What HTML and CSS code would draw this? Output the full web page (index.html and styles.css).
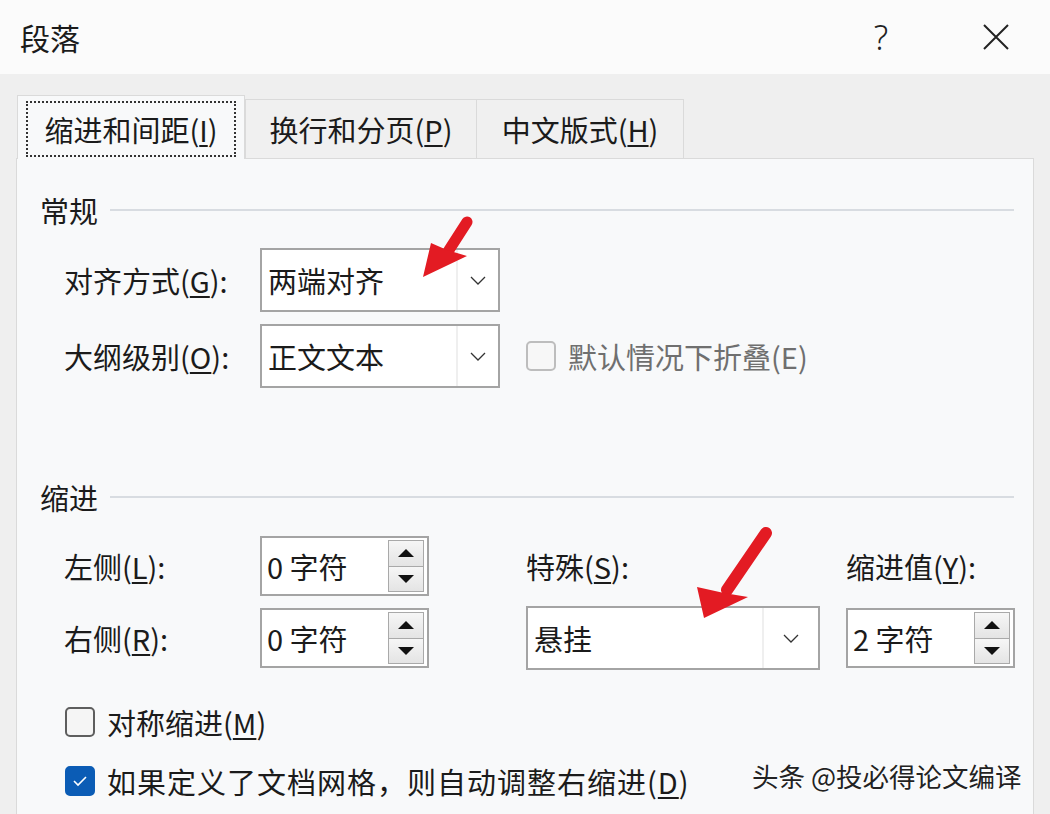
FILE: index.html
```html
<!DOCTYPE html>
<html lang="zh-CN">
<head>
  <meta charset="UTF-8" />
  <title>段落</title>
  <link rel="stylesheet" href="styles.css">
</head>
<body>

<div class="titlebar">
  <span class="title">段落</span>
  <span class="help">?</span>
  <span class="close">
    <svg width="26" height="26" viewBox="0 0 26 26"><path d="M1 1 L25 25 M25 1 L1 25" stroke="#222" stroke-width="2" fill="none"/></svg>
  </span>
</div>

<div class="tabs">
  <div class="tab active"><span class="focus">缩进和间距(<u>I</u>)</span></div>
  <div class="tab t2">换行和分页(<u>P</u>)</div>
  <div class="tab t3">中文版式(<u>H</u>)</div>
</div>

<div class="panel">
  <div class="group-title"><span>常规</span><i></i></div>

  <div class="row">
    <label class="lbl">对齐方式(<u>G</u>):</label>
    <div class="combo">
      <span class="val">两端对齐</span>
      <span class="drop"><svg width="16" height="9" viewBox="0 0 16 9"><path d="M1 1 L8 8 L15 1" stroke="#333" stroke-width="1.3" fill="none"/></svg></span>
    </div>
  </div>
  <div class="row r2">
    <label class="lbl">大纲级别(<u>O</u>):</label>
    <div class="combo">
      <span class="val">正文文本</span>
      <span class="drop"><svg width="16" height="9" viewBox="0 0 16 9"><path d="M1 1 L8 8 L15 1" stroke="#333" stroke-width="1.3" fill="none"/></svg></span>
    </div>
    <div class="check disabled"><span class="box"></span><span>默认情况下折叠(E)</span></div>
  </div>

  <div class="group-title g2"><span>缩进</span><i></i></div>

  <div class="indent">
    <label class="lbl">左侧(<u>L</u>):</label>
    <div class="spin"><span class="val">0 字符</span><span class="btns"><b class="up"></b><b class="down"></b></span></div>
    <span></span>
    <label class="lbl">特殊(<u>S</u>):</label>
    <span></span>
    <label class="lbl">缩进值(<u>Y</u>):</label>

    <label class="lbl">右侧(<u>R</u>):</label>
    <div class="spin"><span class="val">0 字符</span><span class="btns"><b class="up"></b><b class="down"></b></span></div>
    <span></span>
    <div class="combo wide">
      <span class="val">悬挂</span>
      <span class="drop"><svg width="16" height="9" viewBox="0 0 16 9"><path d="M1 1 L8 8 L15 1" stroke="#333" stroke-width="1.3" fill="none"/></svg></span>
    </div>
    <span></span>
    <div class="spin"><span class="val">2 字符</span><span class="btns"><b class="up"></b><b class="down"></b></span></div>
  </div>

  <div class="check c1"><span class="box"></span><span>对称缩进(<u>M</u>)</span></div>
  <div class="check c2 checked">
    <span class="box"><svg width="16" height="12" viewBox="0 0 16 12"><path d="M2 6 L6 10 L14 2" stroke="#fff" stroke-width="1.6" fill="none"/></svg></span>
    <span>如果定义了文档网格，则自动调整右缩进(<u>D</u>)</span>
  </div>
</div>

<div class="watermark">头条 @投必得论文编译</div>

<!-- 红色标注箭头 -->
<svg class="marks" width="1050" height="814" viewBox="0 0 1050 814">
  <line x1="467" y1="222" x2="449" y2="250" stroke="#e31b23" stroke-width="11" stroke-linecap="round"/>
  <polygon points="423,277 431,243 447,250 467,256" fill="#e31b23"/>
  <line x1="766" y1="533" x2="727" y2="590" stroke="#e31b23" stroke-width="12" stroke-linecap="round"/>
  <polygon points="704,618 697,587 724,593 748,597" fill="#e31b23"/>
</svg>

</body>
</html>
```

FILE: styles.css
```css
body { margin: 0; position: relative; height: 814px; overflow: hidden; background: #efefef; color: #1b1b1b;
       font-family: "Noto Sans CJK SC", "Noto Sans", sans-serif; font-size: 29px; }
u { text-decoration-thickness: 1.5px; text-underline-offset: 3px; }

.titlebar { height: 74px; background: #fbfbfb; display: flex; align-items: center; padding: 0 24px 0 20px; }
.title { flex: 1; font-size: 30px; }
.help { width: 60px; text-align: center; font-size: 34px; font-family: "Noto Sans", sans-serif; font-weight: 300; color: #222; margin-right: 55px; }
.close { width: 60px; display: flex; justify-content: center; }

.tabs { display: flex; align-items: flex-end; padding: 21px 0 0 17px; height: 63px; }
.tab { height: 59px; display: flex; align-items: center; justify-content: center; background: #f0f0f0;
       border: 1px solid #dadada; border-bottom: none; box-sizing: border-box; }
.tab.active { width: 228px; height: 64px; background: #f8f9fa; margin-bottom: -1px; position: relative; z-index: 1; }
.t2 { width: 232px; }
.t3 { width: 207px; border-left: none; }
.focus { outline: 2px dotted #333; outline-offset: 0; padding: 5px 16px; margin-top: 2px; }

.panel { margin-left: 16px; width: 1018px; box-sizing: border-box; height: 700px; background: #f8f9fa;
         border: 1px solid #dadada; padding: 31px 19px 0 23px; }

.group-title { display: flex; align-items: center; gap: 12px; line-height: 40px; }
.group-title i { flex: 1; height: 2px; background: #d8dce1; }
.g2 { margin-top: 89px; }

.row { display: flex; align-items: center; padding-left: 24px; margin-top: 18px; }
.row.r2 { margin-top: 12px; }
.lbl { width: 196px; }
.row .lbl { flex: none; }

.combo { width: 240px; height: 64px; box-sizing: border-box; border: 2px solid #a4a4a4; background: #fff; display: flex; }
.combo .val { flex: 1; padding-left: 6px; display: flex; align-items: center; }
.drop { width: 40px; border-left: 2px solid #efefef; display: flex; align-items: center; justify-content: center; }
.combo.wide { width: 294px; align-self: center; }
.combo.wide .drop { width: 54px; }

.check { display: flex; align-items: center; gap: 12px; }
.check .box { width: 30px; height: 30px; box-sizing: border-box; border: 2px solid #5e5e5e; border-radius: 5px; background: #f5f5f5;
              display: flex; align-items: center; justify-content: center; flex: none; }
.check.disabled { margin-left: 26px; color: #6f6f6f; }
.check.disabled .box { border-color: #bdbdbd; background: #f7f7f7; }
.check.checked .box { background: #0b5cb5; border-color: #0b5cb5; }
.c1 { margin: 34px 0 0 25px; height: 40px; }
.c2 { margin: 19px 0 0 25px; height: 40px; letter-spacing: 1px; }

.indent { display: grid; grid-template-columns: 196px 169px 97px 294px 26px 169px; grid-template-rows: 60px 60px;
          row-gap: 12px; align-items: center; padding-left: 24px; margin-top: 19px; }

.spin { height: 60px; box-sizing: border-box; border: 2px solid #a4a4a4; background: #fff; display: flex; }
.spin .val { flex: 1; padding-left: 5px; display: flex; align-items: center; }
.btns { width: 36px; margin: 2px 3px 2px 0; display: flex; flex-direction: column; }
.btns b { flex: 1; border: 1.5px solid #a9a9a9; background: linear-gradient(#f6f6f6, #e4e4e4);
          display: flex; align-items: center; justify-content: center; }
.btns b + b { border-top: none; }
.up::after { content: ""; border: 8px solid transparent; border-top: none; border-bottom: 8px solid #111; }
.down::after { content: ""; border: 8px solid transparent; border-bottom: none; border-top: 8px solid #111; }

.watermark { position: absolute; left: 752px; top: 756px; font-size: 26.5px; color: #222;
             text-shadow: 0 0 2px #fff, 0 0 2px #fff; }
.marks { position: absolute; left: 0; top: 0; pointer-events: none; }
```
